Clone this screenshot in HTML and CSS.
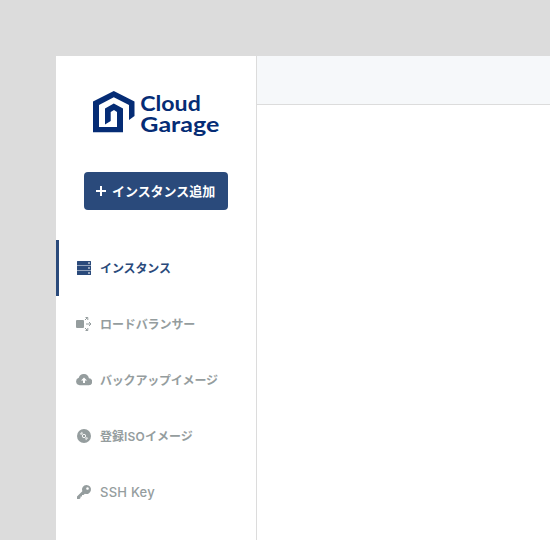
FILE: index.html
```html
<!DOCTYPE html>
<html lang="ja">
<head>
<meta charset="utf-8">
<title>Cloud Garage</title>
<link rel="stylesheet" href="styles.css">
</head>
<body>
<div class="app">
  <aside class="sidebar">
    <svg class="logo" width="128" height="48" viewBox="0 0 128 48">
      <path class="logo-mark" d="M0 10.500 20.800 0 41.500 10.500V25L36 29V14L20.800 6.300 6 14V36H24V21L21 19 17.700 21V30L12 33.500V17.500L20.800 12.500 30 17.500V41.300H0Z"/>
      <text class="logo-text" x="47.300" y="20" textLength="60.500" lengthAdjust="spacingAndGlyphs">Cloud</text>
      <text class="logo-text" x="47.300" y="40.500" textLength="79" lengthAdjust="spacingAndGlyphs">Garage</text>
    </svg>
    <button class="add" type="button">
      <svg class="plus" width="10" height="10" viewBox="0 0 10 10"><path d="M5 0V10M0 5H10"/></svg>
      <span>インスタンス追加</span>
    </button>
    <nav class="menu">
      <a class="item active">
        <svg class="icon" viewBox="0 0 16 16"><path d="M1 1.500Q1 1 1.500 1H14.500Q15 1 15 1.500V5H1ZM1 6H15V10H1ZM1 11H15V14.500Q15 15 14.500 15H1.500Q1 15 1 14.500Z"/><path class="seam" d="M1 5H15V6H1zM1 10H15V11H1z"/><path class="hole" d="M12 2.500h2v1h-2zM12 7.500h2v1h-2zM12 12.500h2v1h-2z"/></svg>
        <span class="w-instance">インスタンス</span>
      </a>
      <a class="item">
        <svg class="icon" viewBox="0 0 16 16"><rect y="4" width="8" height="8" rx="1"/><path class="line" d="M9 4 11.500 1.500M9.500 1.500H11.800V4M10 8H15M13 6 15 8 13 10M9 12 11.500 14.500M9.500 14.500H11.800V12"/></svg>
        <span class="w-balancer">ロードバランサー</span>
      </a>
      <a class="item">
        <svg class="icon" viewBox="0 0 16 16"><path d="M3.700 13.300a3.900 3.900 0 0 1-.9-7.600A5.200 5.200 0 0 1 12.900 6.300 3.500 3.500 0 0 1 12.500 13.300Z"/><path class="hole" d="M8 5.500 11 8.500H9V11H7V8.500H5Z"/></svg>
        <span class="w-backup">バックアップイメージ</span>
      </a>
      <a class="item">
        <svg class="icon" viewBox="0 0 16 16"><circle cx="8" cy="8" r="7"/><circle class="ring" cx="8" cy="8" r="1.700"/><path class="glint" d="M3.600 6 6 3.600 7 5.500 5.500 7ZM12.400 10 10 12.400 9 10.500 10.500 9Z"/></svg>
        <span class="w-iso">登録<span class="iso">ISO</span>イメージ</span>
      </a>
      <a class="item">
        <svg class="icon" viewBox="0 0 16 16"><path fill-rule="evenodd" d="M10.500 1a4.500 4.500 0 1 1-1.600 8.700L7.500 11H6v1.500H4.500V14L3.500 15H1V12.500L6.300 7.200A4.500 4.500 0 0 1 10.500 1ZM11.500 3.200a1.300 1.300 0 1 0 .01 0Z"/></svg>
        <span class="latin">SSH Key</span>
      </a>
    </nav>
  </aside>
  <main class="content"><header class="topbar"></header></main>
</div>
</body>
</html>
```
FILE: styles.css
```css
* { box-sizing: border-box; }
body {
  margin: 0;
  height: 540px;
  overflow: hidden;
  padding: 56px 0 0 56px;
  background: #dcdcdc;
  font-family: "Noto Sans CJK JP", sans-serif;
}
.app { display: flex; height: 484px; background: #fff; }
.sidebar { width: 201px; flex: none; border-right: 1px solid #dcdcdc; }
.logo { display: block; margin: 35px 0 0 37px; overflow: visible; }
.logo-mark { fill: #052c75; }
.logo-text { fill: #052c75; font: 700 20px Lato, sans-serif; }
.add {
  display: flex;
  align-items: center;
  width: 144px;
  height: 38px;
  margin: 33px 0 0 28px;
  padding: 0 0 0 12px;
  gap: 6px;
  border: 0;
  border-radius: 4px;
  background: #2a4a7b;
  color: #fff;
  font: 700 13px/20px "Noto Sans CJK JP", sans-serif;
  letter-spacing: -.05px;
  white-space: nowrap;
}
.plus { fill: none; stroke: #fff; stroke-width: 2; }
.menu { margin-top: 30px; }
.item {
  display: flex;
  align-items: center;
  gap: 8px;
  height: 56px;
  padding-left: 17px;
  border-left: 3px solid transparent;
  color: #959d9e;
  font-size: 12px;
  font-weight: 700;
  line-height: 20px;
  white-space: nowrap;
}
.active { border-left-color: #2a4a7b; color: #2a4a7b; }
.icon { width: 16px; height: 16px; flex: none; fill: currentColor; }
.hole { fill: #fff; }
.seam { fill: #94a4bd; }
.line { fill: none; stroke: currentColor; stroke-width: 1; }
.ring { fill: none; stroke: #fff; stroke-width: .9; }
.glint { fill: #fff; fill-opacity: .65; }
.w-instance, .w-balancer { letter-spacing: -.1px; }
.w-backup { letter-spacing: -.2px; }
.iso { font-family: Inter, sans-serif; font-weight: 600; letter-spacing: .2px; line-height: 1; }
.latin { font-family: Inter, sans-serif; font-size: 13px; font-weight: 500; letter-spacing: .25px; }
.content { flex: 1; }
.topbar { height: 49px; border-bottom: 1px solid #dcdcdc; background: #f6f8fa; }
```
